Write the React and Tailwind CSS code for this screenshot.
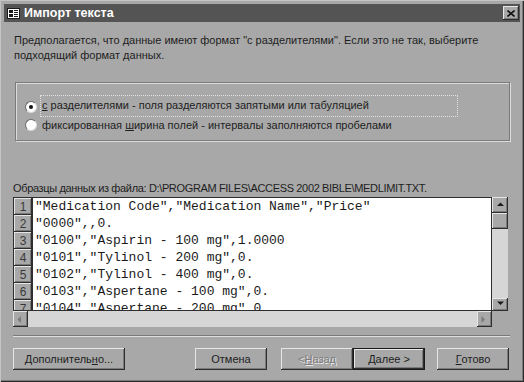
import React from 'react';

const rows = [
  '"Medication Code","Medication Name","Price"',
  '"0000",,0.',
  '"0100","Aspirin - 100 mg",1.0000',
  '"0101","Tylinol - 200 mg",0.',
  '"0102","Tylinol - 400 mg",0.',
  '"0103","Aspertane - 100 mg",0.',
  '"0104","Aspertane - 200 mg",0.',
];

const bevel =
  'bg-[#a8a8a8] shadow-[inset_-1px_-1px_0_#2e2e2e,inset_1px_1px_0_#e6e6e6,inset_-2px_-2px_0_#7a7a7a]';

const Arrow = ({ dir, color = '#1a1a1a' }) => {
  const pts = {
    up: '1,5 4.5,1.5 8,5',
    down: '1,1.5 4.5,5 8,1.5',
    left: '5,1 1.5,4.5 5,8',
    right: '1.5,1 5,4.5 1.5,8',
  }[dir];
  return (
    <svg width="9" height="9" viewBox="0 0 9 9">
      <polygon points={pts} fill={color} />
    </svg>
  );
};

const Button = ({ children, className = '', def = false, disabled = false }) => (
  <div
    className={`h-[22px] flex items-center justify-center text-[11px] ${
      disabled ? 'text-[#7c7c7c] [text-shadow:1px_1px_0_#e8e8e8]' : 'text-[#1e1e1e]'
    } ${def ? 'border border-[#1a1a1a] ' : ''}${bevel} ${className}`}
  >
    {children}
  </div>
);

const Radio = ({ checked }) => (
  <div className="w-[12px] h-[12px] rounded-full bg-white border border-t-[#6a6a6a] border-l-[#6a6a6a] border-b-[#dcdcdc] border-r-[#dcdcdc] flex items-center justify-center shrink-0">
    {checked && <div className="w-[4px] h-[4px] rounded-full bg-[#111]" />}
  </div>
);

export default function App() {
  return (
    <div className="w-[524px] h-[382px] overflow-hidden bg-[#a8a8a8] px-[4px] pt-[4px] font-['Liberation_Sans',Arial,sans-serif] shadow-[inset_1px_1px_0_#c4c4c4,inset_-1px_-1px_0_#2a2a2a,inset_-2px_-2px_0_#7a7a7a]">
      {/* Title bar */}
      <div className="h-[18px] bg-[#545454] flex items-center pl-[3px] pr-[1px]">
        <svg width="13" height="11" viewBox="0 0 13 11">
          <rect x="0.5" y="0.5" width="12" height="10" fill="#fff" stroke="#1c1c1c" />
          <rect x="2" y="2" width="4" height="3" fill="#1c1c1c" />
          <rect x="7" y="2" width="4" height="1" fill="#1c1c1c" />
          <rect x="7" y="4" width="4" height="1" fill="#1c1c1c" />
          <rect x="2" y="6" width="4" height="3" fill="#1c1c1c" />
          <rect x="7" y="6" width="4" height="1" fill="#1c1c1c" />
          <rect x="7" y="8" width="4" height="1" fill="#1c1c1c" />
        </svg>
        <span className="ml-[4px] text-white font-bold text-[12.5px] leading-none">Импорт текста</span>
        <div className={`ml-auto w-[16px] h-[14px] flex items-center justify-center ${bevel}`}>
          <svg width="8" height="7" viewBox="0 0 8 7">
            <path d="M0.5 0.5 L7.5 6.5 M7.5 0.5 L0.5 6.5" stroke="#111" strokeWidth="1.6" />
          </svg>
        </div>
      </div>

      {/* Intro */}
      <p className="pl-[10px] pt-[11px] text-[11px] leading-[15px] text-[#1e1e1e]">
        Предполагается, что данные имеют формат "с разделителями". Если это не так, выберите
        <br />
        подходящий формат данных.
      </p>

      {/* Option group */}
      <div className="ml-[11px] mt-[19px] w-[495px] h-[59px] border border-[#7a7a7a] shadow-[1px_1px_0_#dcdcdc,inset_1px_1px_0_#dcdcdc] pt-[12px] pl-[9px]">
        <div className="flex items-center h-[22px]">
          <div className="pt-[1px]">
            <Radio checked />
          </div>
          <div className="ml-[3px] w-[418px] h-[22px] border border-dotted border-[#e2e2e2] pl-[1px] pt-[2px] text-[11px] leading-[14px] text-[#1e1e1e]">
            <span className="underline">с</span> разделителями - поля разделяются запятыми или табуляцией
          </div>
        </div>
        <div className="flex items-center h-[16px]">
          <Radio />
          <div className="ml-[4px] pl-[1px] text-[11px] leading-[14px] text-[#1e1e1e]">
            фиксированная <span className="underline">ш</span>ирина полей - интервалы заполняются пробелами
          </div>
        </div>
      </div>

      {/* Sample label */}
      <div className="ml-[9px] mt-[41px] text-[11px] leading-[13px] text-[#1e1e1e] tracking-[-0.35px]">
        Образцы данных из файла: D:\PROGRAM FILES\ACCESS 2002 BIBLE\MEDLIMIT.TXT.
      </div>

      {/* Data grid */}
      <div className="ml-[9px] mt-[2px] w-[495px] h-[130px] flex flex-col">
        <div className="flex h-[114px]">
          <div className="w-[479px] h-[114px] bg-white border border-[#2e2e2e] overflow-hidden">
            {rows.map((r, i) => (
              <div key={i} className="flex h-[17px] shrink-0">
                <div
                  className={`w-[19px] h-[17px] shrink-0 flex items-center justify-center text-[12px] text-[#3a3a3a] border-r border-[#2e2e2e] ${bevel}`}
                >
                  {i + 1}
                </div>
                <div className="pl-[2px] font-['Liberation_Mono','Courier_New',monospace] text-[13px] leading-[17px] text-[#1a1a1a] whitespace-pre">
                  {r}
                </div>
              </div>
            ))}
          </div>
          <div className="w-[16px] h-[114px] bg-[#d6d6d6] flex flex-col">
            <div className={`w-[16px] h-[16px] flex items-center justify-center ${bevel}`}>
              <Arrow dir="up" />
            </div>
            <div className={`w-[16px] h-[16px] ${bevel}`} />
            <div className={`mt-auto w-[16px] h-[13px] flex items-center justify-center ${bevel}`}>
              <Arrow dir="down" />
            </div>
          </div>
        </div>
        <div className="flex h-[16px]">
          <div className="w-[479px] h-[16px] bg-[#d6d6d6] flex justify-between">
            <div className={`w-[15px] h-[16px] flex items-center justify-center ${bevel}`}>
              <Arrow dir="left" color="#7a7a7a" />
            </div>
            <div className={`w-[15px] h-[16px] flex items-center justify-center ${bevel}`}>
              <Arrow dir="right" color="#7a7a7a" />
            </div>
          </div>
        </div>
      </div>

      {/* Separator */}
      <div className="ml-[9px] mt-[8px] w-[497px] h-[2px] border-t border-[#7a7a7a] border-b border-b-[#dedede]" />

      {/* Buttons */}
      <div className="ml-[9px] mt-[11px] flex">
        <Button className="w-[112px]">
          Дополнитель<span className="underline">н</span>о...
        </Button>
        <Button className="ml-[70px] w-[72px]">Отмена</Button>
        <Button className="ml-[14px] w-[72px]" disabled>
          &lt; <span className="underline">Н</span>азад
        </Button>
        <Button className="w-[72px]" def>
          <span className="underline">Д</span>алее &gt;
        </Button>
        <Button className="ml-[12px] w-[72px]">
          <span className="underline">Г</span>отово
        </Button>
      </div>
    </div>
  );
}
